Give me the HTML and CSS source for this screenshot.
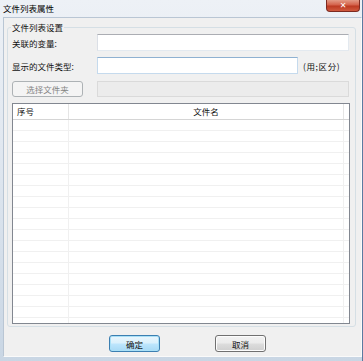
FILE: index.html
```html
<!DOCTYPE html>
<html lang="zh-CN">
<head>
<meta charset="UTF-8" />
<title>文件列表属性</title>
<link rel="stylesheet" href="styles.css">
</head>
<body>

<div class="janela">
  <div class="titulo">
    <span class="titulo-texto">文件列表属性</span>
    <div class="fechar">&#x2715;</div>
  </div>

  <div class="cliente">
    <fieldset class="grupo">
      <legend>文件列表设置</legend>

      <div class="linha linha-1">
        <label class="rotulo">关联的变量:</label>
        <input class="campo campo-largo" type="text">
      </div>

      <div class="linha linha-2">
        <label class="rotulo">显示的文件类型:</label>
        <input class="campo campo-medio ativo" type="text">
        <span class="dica">(用;区分)</span>
      </div>

      <div class="linha linha-3">
        <button class="botao-pasta" disabled>选择文件夹</button>
        <input class="campo campo-caminho" type="text" disabled>
      </div>

      <div class="lista">
        <div class="lista-cabecalho">
          <div class="col col-num">序号</div>
          <div class="col col-nome">文件名</div>
          <div class="col col-resto"></div>
        </div>
        <div class="lista-linha"><div class="col col-num"></div><div class="col col-nome"></div><div class="col col-resto"></div></div>
        <div class="lista-linha"><div class="col col-num"></div><div class="col col-nome"></div><div class="col col-resto"></div></div>
        <div class="lista-linha"><div class="col col-num"></div><div class="col col-nome"></div><div class="col col-resto"></div></div>
        <div class="lista-linha"><div class="col col-num"></div><div class="col col-nome"></div><div class="col col-resto"></div></div>
        <div class="lista-linha"><div class="col col-num"></div><div class="col col-nome"></div><div class="col col-resto"></div></div>
        <div class="lista-linha"><div class="col col-num"></div><div class="col col-nome"></div><div class="col col-resto"></div></div>
        <div class="lista-linha"><div class="col col-num"></div><div class="col col-nome"></div><div class="col col-resto"></div></div>
        <div class="lista-linha"><div class="col col-num"></div><div class="col col-nome"></div><div class="col col-resto"></div></div>
        <div class="lista-linha"><div class="col col-num"></div><div class="col col-nome"></div><div class="col col-resto"></div></div>
        <div class="lista-linha"><div class="col col-num"></div><div class="col col-nome"></div><div class="col col-resto"></div></div>
        <div class="lista-linha"><div class="col col-num"></div><div class="col col-nome"></div><div class="col col-resto"></div></div>
        <div class="lista-linha"><div class="col col-num"></div><div class="col col-nome"></div><div class="col col-resto"></div></div>
        <div class="lista-linha"><div class="col col-num"></div><div class="col col-nome"></div><div class="col col-resto"></div></div>
        <div class="lista-linha"><div class="col col-num"></div><div class="col col-nome"></div><div class="col col-resto"></div></div>
        <div class="lista-linha"><div class="col col-num"></div><div class="col col-nome"></div><div class="col col-resto"></div></div>
        <div class="lista-linha"><div class="col col-num"></div><div class="col col-nome"></div><div class="col col-resto"></div></div>
        <div class="lista-linha"><div class="col col-num"></div><div class="col col-nome"></div><div class="col col-resto"></div></div>
        <div class="lista-linha"><div class="col col-num"></div><div class="col col-nome"></div><div class="col col-resto"></div></div>
        <div class="lista-linha"><div class="col col-num"></div><div class="col col-nome"></div><div class="col col-resto"></div></div>
      </div>
    </fieldset>

    <div class="rodape">
      <button class="botao botao-padrao">确定</button>
      <button class="botao">取消</button>
    </div>
  </div>
</div>

</body>
</html>
```

FILE: styles.css
```css
/* Reset básico */
* {
  box-sizing: border-box;
}
body {
  margin: 0;
  width: 363px;
  height: 361px;
  overflow: hidden;
  font-family: 'Noto Sans CJK SC', 'Noto Sans', sans-serif;
  font-size: 8.5px;
  color: #111;
}
.janela {
  width: 363px;
  height: 361px;
  display: flex;
  flex-direction: column;
  background: linear-gradient(to bottom, #edf1f6 0%, #e1e8f0 40%, #c9d6e4 100%);
  border-right: 1px solid #5b7aa0;
}
/* Barra de título */
.titulo {
  height: 17px;
  display: flex;
  justify-content: space-between;
  align-items: flex-start;
}
.titulo-texto {
  padding: 3px 0 0 3px;
  line-height: 10px;
  color: #000;
}
/* Botão fechar vermelho do Windows 7 */
.fechar {
  width: 34px;
  height: 12px;
  margin-right: 2px;
  border: 1px solid #7d2a20;
  border-top: none;
  border-radius: 0 0 4px 4px;
  background: linear-gradient(to bottom, #e39a86 0%, #d4614a 45%, #bd3a22 55%, #d05a3e 100%);
  color: #fff;
  font-family: 'DejaVu Sans', sans-serif;
  font-size: 8px;
  font-weight: bold;
  line-height: 11px;
  text-align: center;
}
/* Área cliente */
.cliente {
  flex: 1;
  margin: 0 0 4px 3px;
  background: #f0f0f0;
  border: 1px solid #fafafa;
  border-top-color: #b9c6d4;
  border-left-color: #b9c6d4;
  padding: 4px 5px 0 3px;
  display: flex;
  flex-direction: column;
}
.grupo {
  margin: 0;
  padding: 0 5px 2px 4px;
  border: 1px solid #d5dfe5;
  border-radius: 3px;
  min-width: 0;
}
.grupo legend {
  padding: 0 1px 0 1px;
  margin-left: -1px;
  line-height: 10px;
  height: 10px;
}
.linha {
  display: flex;
  align-items: center;
}
.linha-1 {
  margin-top: 2px;
}
.linha-2 {
  margin-top: 6px;
}
.linha-3 {
  margin-top: 7px;
}
.rotulo {
  width: 85px;
  line-height: 10px;
}
.campo {
  height: 17px;
  margin: 0;
  padding: 0 2px;
  font: inherit;
  background: #fff;
  border: 1px solid #e3e9ef;
  border-top-color: #abadb3;
  border-left-color: #dbdfe6;
  outline: none;
}
.campo-largo {
  width: 252px;
}
.campo-medio {
  width: 201px;
}
.ativo {
  border-color: #c5daed;
  border-top-color: #8fb1d1;
}
.dica {
  margin-left: 5px;
  line-height: 10px;
  letter-spacing: 0.6px;
}
.botao-pasta {
  width: 71px;
  height: 16px;
  margin: 0 14px 0 0;
  padding: 0;
  font: inherit;
  color: #838383;
  background: #f4f4f4;
  border: 1px solid #adb2b5;
  border-radius: 3px;
}
.campo-caminho {
  width: 252px;
  height: 16px;
  background: #ececec;
  border-color: #dadada;
}
/* Lista de arquivos */
.lista {
  margin-top: 6px;
  width: 338px;
  height: 221px;
  overflow: hidden;
  background: #fff;
  border: 1px solid #828790;
}
.lista-cabecalho {
  display: flex;
  height: 16px;
  border-bottom: 1px solid #d5d5d5;
  line-height: 15px;
}
.lista-cabecalho .col {
  border-right: 1px solid #e5e5e5;
}
.lista-linha {
  display: flex;
  height: 11px;
  border-bottom: 1px solid #f0f0f0;
}
.lista-linha .col {
  border-right: 1px solid #f0f0f0;
}
.col-num {
  width: 56px;
  padding-left: 4px;
}
.col-nome {
  width: 275px;
  text-align: center;
}
.col-resto {
  flex: 1;
}
.lista .col-resto {
  border-right: none;
}
/* Botões do rodapé */
.rodape {
  display: flex;
  gap: 55px;
  padding-left: 102px;
  margin-top: 8px;
}
.botao {
  width: 51px;
  height: 17px;
  padding: 0;
  font: inherit;
  color: #111;
  border: 1px solid #707070;
  border-radius: 3px;
  background: linear-gradient(to bottom, #f2f2f2 0%, #ebebeb 49%, #dddddd 51%, #cfcfcf 100%);
  box-shadow: inset 0 0 0 1px #fcfcfc;
}
.botao-padrao {
  border-color: #3c7fb1;
  background: linear-gradient(to bottom, #eaf6fd 0%, #d9f0fc 49%, #bee6fd 51%, #a7d9f5 100%);
  box-shadow: inset 0 0 0 1px #a9e0f7;
}
```
